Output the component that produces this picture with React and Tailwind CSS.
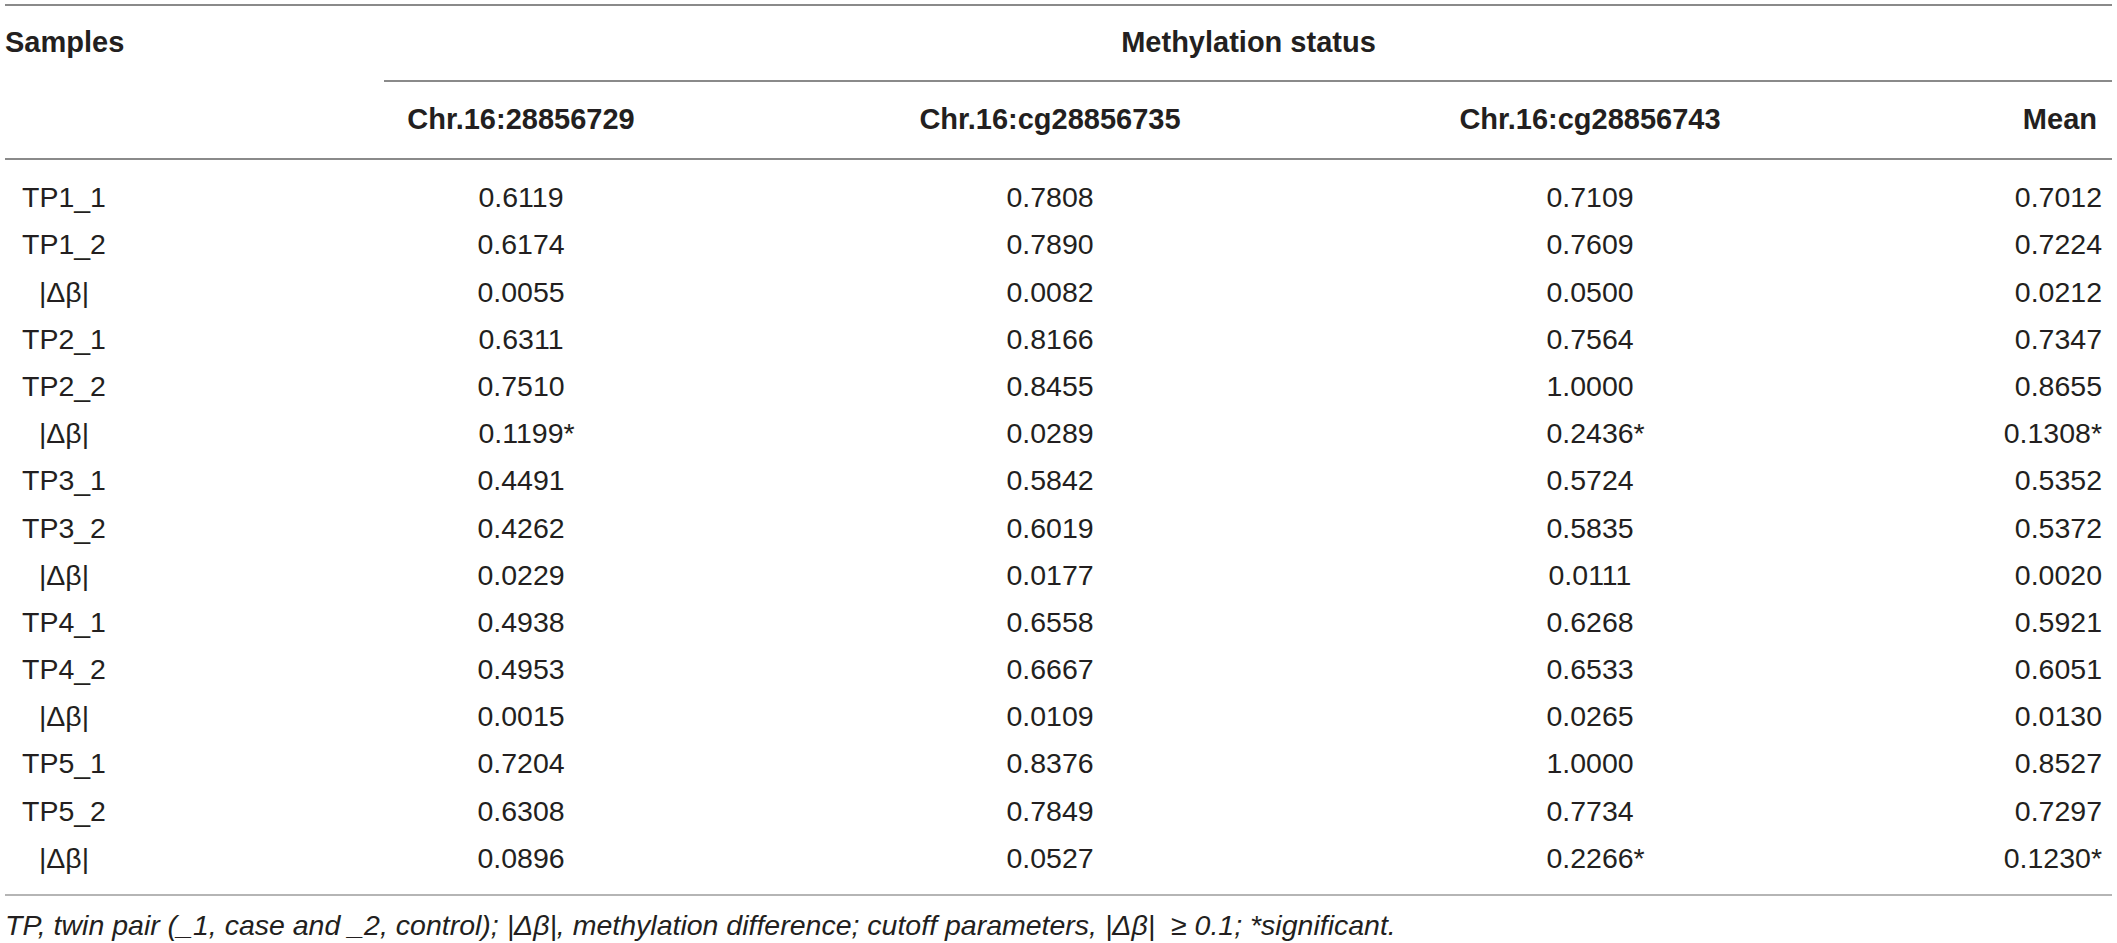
import React from 'react';

const rows = [
    ['TP1_1', '0.6119', '0.7808', '0.7109', '0.7012'],
    ['TP1_2', '0.6174', '0.7890', '0.7609', '0.7224'],
    ['delta', '0.0055', '0.0082', '0.0500', '0.0212'],
    ['TP2_1', '0.6311', '0.8166', '0.7564', '0.7347'],
    ['TP2_2', '0.7510', '0.8455', '1.0000', '0.8655'],
    ['delta', '0.1199*', '0.0289', '0.2436*', '0.1308*'],
    ['TP3_1', '0.4491', '0.5842', '0.5724', '0.5352'],
    ['TP3_2', '0.4262', '0.6019', '0.5835', '0.5372'],
    ['delta', '0.0229', '0.0177', '0.0111', '0.0020'],
    ['TP4_1', '0.4938', '0.6558', '0.6268', '0.5921'],
    ['TP4_2', '0.4953', '0.6667', '0.6533', '0.6051'],
    ['delta', '0.0015', '0.0109', '0.0265', '0.0130'],
    ['TP5_1', '0.7204', '0.8376', '1.0000', '0.8527'],
    ['TP5_2', '0.6308', '0.7849', '0.7734', '0.7297'],
    ['delta', '0.0896', '0.0527', '0.2266*', '0.1230*'],
];

const cols = 'grid grid-cols-[379px_274px_784px_296px_1fr]';

// value cell: the numbers of a column share their centre; an asterisk must not shift it
const Value = ({ v }) => {
    const star = v.endsWith('*');
    const num = star ? v.slice(0, -1) : v;
    return (
        <div className="flex justify-center">
            <span className="relative">
                {num}
                {star && <span className="absolute left-full">*</span>}
            </span>
        </div>
    );
};

const Label = ({ text }) => (
    <div className="w-[118px] text-center">
        {text === 'delta' ? <span>|Δβ|</span> : text}
    </div>
);

export default function App() {
    return (
        <div className="w-full min-h-screen bg-white px-[5px] pt-[4px] text-[#231f20]" style={{ fontFamily: '"Liberation Sans", Arial, sans-serif' }}>
            <div className="h-[2px] bg-[#8a8a8a]" />

            {/* header */}
            <div className={`${cols} text-[29px] font-bold`}>
                <div className="row-span-2 pt-[19px] leading-[34px]">Samples</div>
                <div className="col-span-4 flex flex-col">
                    <div className="h-[74px] flex items-center justify-center pl-[1px]">Methylation status</div>
                    <div className="h-[2px] bg-[#8a8a8a]" />
                </div>
                <div className="h-[76px] flex items-center justify-center">Chr.16:28856729</div>
                <div className="h-[76px] flex items-center justify-center">Chr.16:cg28856735</div>
                <div className="h-[76px] flex items-center justify-center">Chr.16:cg28856743</div>
                <div className="h-[76px] flex items-center justify-end pr-[15px]">Mean</div>
            </div>
            <div className="h-[2px] bg-[#8a8a8a]" />

            {/* body */}
            <div className="pt-[14px] pb-[12px] text-[28.5px]">
                {rows.map((r, i) => (
                    <div key={i} className={`${cols} h-[47.2px] items-center`}>
                        <Label text={r[0]} />
                        <Value v={r[1]} />
                        <Value v={r[2]} />
                        <Value v={r[3]} />
                        <div className="text-right pr-[10px]">{r[4]}</div>
                    </div>
                ))}
            </div>
            <div className="h-[2px] bg-[#b5b5b5]" />

            <p className="pt-[13px] text-[28.5px] italic leading-[32px]">
                TP, twin pair (_1, case and _2, control); |Δβ|, methylation difference; cutoff parameters, |Δβ|&nbsp; ≥ 0.1; *significant.
            </p>
        </div>
    );
}
